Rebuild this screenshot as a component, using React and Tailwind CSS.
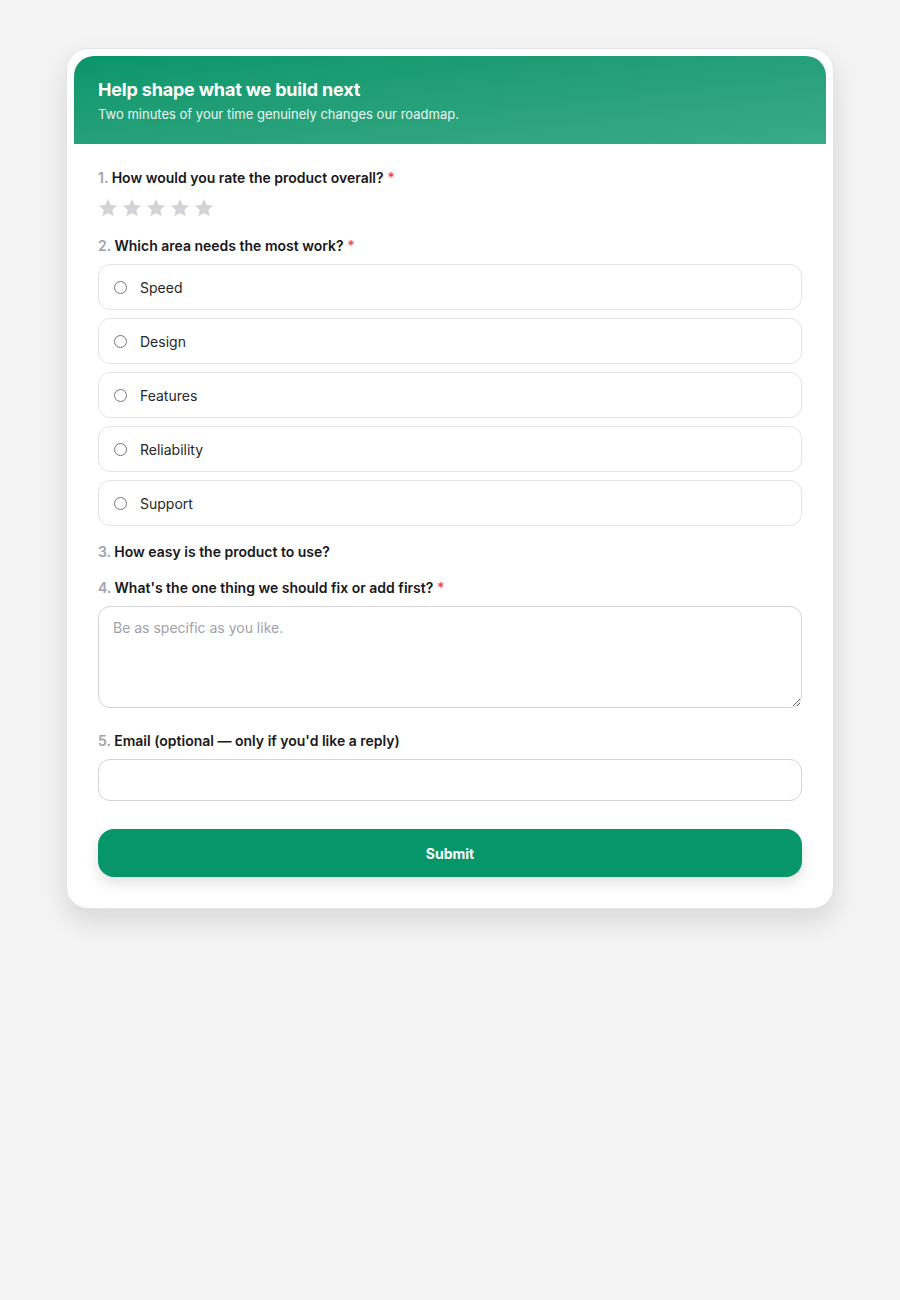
import React from 'react';

const options = ['Speed', 'Design', 'Features', 'Reliability', 'Support'];

function Label({ n, text, required }) {
  return (
    <p className="text-[14px] leading-5 font-semibold text-[#18181b]">
      <span className="text-[#a1a1aa]">{n}.</span> {text}
      {required && <span className="text-[#f43f5e]"> *</span>}
    </p>
  );
}

function Star() {
  return (
    <svg width="24" height="24" viewBox="0 0 24 24" className="text-[#d4d4d8]">
      <path fill="currentColor" d="M12 2.8l2.7 6.1 6.6.6-5 4.4 1.5 6.5L12 17l-5.8 3.4 1.5-6.5-5-4.4 6.6-.6z" />
    </svg>
  );
}

export default function App() {
  return (
    <div className="min-h-[1300px] bg-[#f4f4f4] pt-12 pb-12" style={{ fontFamily: "Inter, 'Noto Sans', sans-serif" }}>
      <div className="w-[768px] mx-auto bg-white rounded-[22px] border border-[#e4e4e7] shadow-[0_12px_28px_rgba(0,0,0,0.12)] p-[7px] pb-[31px]">
        {/* header */}
        <div className="rounded-t-[20px] bg-linear-to-br from-[#079669] to-[#38aa88] px-6 pt-[22px] pb-[20px] text-white">
          <h1 className="text-[18px] leading-6 font-bold tracking-[-0.01em]">Help shape what we build next</h1>
          <p className="text-[13px] leading-5 mt-[2px] text-white/90">Two minutes of your time genuinely changes our roadmap.</p>
        </div>

        <div className="px-6 pt-6 flex flex-col gap-4">
          <div className="flex flex-col gap-2">
            <Label n={1} text="How would you rate the product overall?" required />
            <div className="flex -ml-[2px]">
              {[0, 1, 2, 3, 4].map(i => <Star key={i} />)}
            </div>
          </div>

          <div className="flex flex-col gap-2">
            <Label n={2} text="Which area needs the most work?" required />
            {options.map(o => (
              <label key={o} className="h-[46px] flex items-center gap-[13px] px-[15px] border border-[#e4e4e7] rounded-[12px] text-[14px] text-[#27272a]">
                <input type="radio" name="area" className="w-[13px] h-[13px] m-0" />
                {o}
              </label>
            ))}
          </div>

          <Label n={3} text="How easy is the product to use?" />

          <div className="flex flex-col gap-2">
            <Label n={4} text="What's the one thing we should fix or add first?" required />
            <textarea
              placeholder="Be as specific as you like."
              className="block h-[102px] w-full border border-[#d4d4d8] rounded-[12px] px-[14px] py-[10px] text-[14px] placeholder:text-[#a1a1aa] outline-none"
            />
          </div>

          <div className="flex flex-col gap-2 mt-[7px]">
            <Label n={5} text="Email (optional — only if you'd like a reply)" />
            <input type="email" className="block h-[42px] w-full border border-[#d4d4d8] rounded-[12px] px-[14px] text-[14px] outline-none" />
          </div>

          <button className="mt-3 h-12 w-full rounded-[16px] bg-[#079669] text-white text-[14px] font-bold shadow-[0_6px_14px_rgba(0,0,0,0.12)]">
            Submit
          </button>
        </div>
      </div>
    </div>
  );
}
